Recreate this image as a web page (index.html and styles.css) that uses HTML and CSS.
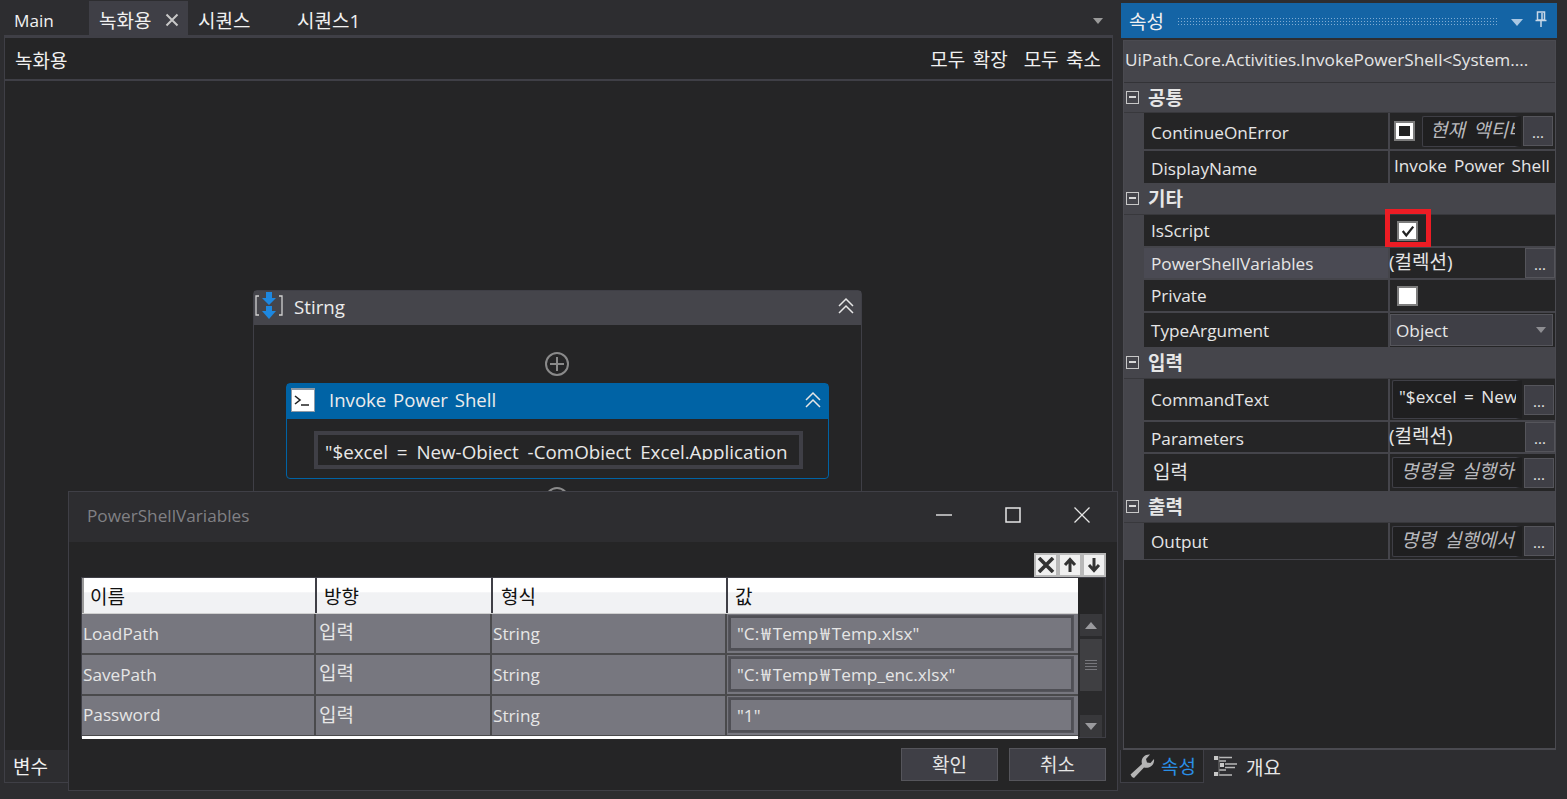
FILE: index.html
```html
<!DOCTYPE html>
<html>
	<head>
		<title>Recording</title>
		<link rel="stylesheet" href="styles.css">
	</head>
	<body>
		<div class="app">
			<div class="left">
				<div class="tabs">
					<div class="tab tab-main">Main</div>
					<div class="tab tab-active ko">녹화용<svg class="tab-x" width="14" height="14" viewBox="0 0 14 14"><path d="M1.5 1.5 12.5 12.5M12.5 1.5 1.5 12.5" stroke="#c8c8c8" stroke-width="2"/></svg></div>
					<div class="tab tab-seq ko">시퀀스</div>
					<div class="tab tab-seq1 ko">시퀀스1</div>
					<svg class="tabs-arrow" width="10" height="6" viewBox="0 0 10 6"><path d="M0 0H10L5 6Z" fill="#9a9a9a"/></svg>
				</div>
				<div class="doc">
					<div class="doc-head">
						<span class="crumb ko">녹화용</span>
						<span class="doc-actions ko"><span>모두 확장</span><span>모두 축소</span></span>
					</div>
					<div class="canvas">
						<div class="seq">
							<div class="seq-head">
								<svg width="30" height="30" viewBox="0 0 30 30">
									<path d="M5 5H2V24H5M25 5H28V24H25" fill="none" stroke="#d0d0d0" stroke-width="1.3"/>
									<path d="M12 1H18V7H22L15 14 8 7H12ZM12 15H18V20H22L15 28 8 20H12Z" fill="#1e88e0"/>
								</svg>
								<span class="seq-title">Stirng</span>
								<svg class="chev" width="18" height="18" viewBox="0 0 18 18"><path d="M2 9 9 2 16 9M2 16 9 9 16 16" fill="none" stroke="#e6e6e6" stroke-width="1.5"/></svg>
							</div>
							<div class="seq-body">
								<svg class="plus" width="26" height="26" viewBox="0 0 26 26"><circle cx="13" cy="13" r="11" fill="none" stroke="#8a8a8a" stroke-width="2"/><path d="M13 6V20M6 13H20" stroke="#8a8a8a" stroke-width="2"/></svg>
								<div class="act">
									<div class="act-head">
										<svg width="24" height="24" viewBox="0 0 24 24"><rect x="0" y="0" width="24" height="24" fill="#8f9aa6"/><rect x="1" y="2" width="22" height="21" fill="#fff"/><path d="M4 8 9 12 4 16" fill="none" stroke="#222" stroke-width="1.6"/><path d="M10 17H18" stroke="#222" stroke-width="1.5"/></svg>
										<span class="act-title">Invoke Power Shell</span>
										<svg class="chev" width="18" height="18" viewBox="0 0 18 18"><path d="M2 9 9 2 16 9M2 16 9 9 16 16" fill="none" stroke="#e6e6e6" stroke-width="1.5"/></svg>
									</div>
									<div class="act-body">
										<div class="act-input"><span>"$excel = New-Object -ComObject Excel.Application</span></div>
									</div>
								</div>
								<svg class="plus plus-low" width="26" height="26" viewBox="0 0 26 26"><circle cx="13" cy="13" r="11" fill="none" stroke="#8a8a8a" stroke-width="2"/></svg>
							</div>
						</div>

						<div class="dialog">
							<div class="dlg-title">
								<span class="dlg-name">PowerShellVariables</span>
								<svg class="win-btn win-min" width="16" height="16" viewBox="0 0 16 16"><path d="M0 8H16" stroke="#e6e6e6" stroke-width="1.4"/></svg>
								<svg class="win-btn win-max" width="16" height="16" viewBox="0 0 16 16"><rect x="1" y="1" width="14" height="14" fill="none" stroke="#e6e6e6" stroke-width="1.5"/></svg>
								<svg class="win-btn win-close" width="16" height="16" viewBox="0 0 16 16"><path d="M0.5 0.5 15.5 15.5M15.5 0.5 0.5 15.5" stroke="#e6e6e6" stroke-width="1.3"/></svg>
							</div>
							<div class="dlg-body">
								<div class="row-tools">
									<span class="tool"><svg width="18" height="16" viewBox="0 0 18 16"><path d="M2 1 16 15M16 1 2 15" stroke="#333" stroke-width="3.6"/></svg></span>
									<span class="tool"><svg width="14" height="16" viewBox="0 0 14 16"><path d="M7 3V15M2 8 7 2.5 12 8" fill="none" stroke="#333" stroke-width="3"/></svg></span>
									<span class="tool"><svg width="14" height="16" viewBox="0 0 14 16"><path d="M7 13V1M2 8 7 13.5 12 8" fill="none" stroke="#333" stroke-width="3"/></svg></span>
								</div>
								<div class="grid-wrap">
									<div class="grid">
										<div class="g-head ko">
											<div class="hc hc-name">이름</div>
											<div class="hc hc-dir">방향</div>
											<div class="hc hc-type">형식</div>
											<div class="hc hc-val">값</div>
										</div>
										<div class="g-row g-r1">
											<div class="c c-name">LoadPath</div>
											<div class="c c-dir ko"><span>입력</span></div>
											<div class="c c-type">String</div>
											<div class="c c-val"><div class="val-box">"C:<span class="won">₩</span>Temp<span class="won">₩</span>Temp.xlsx"</div></div>
										</div>
										<div class="g-row g-r2">
											<div class="c c-name">SavePath</div>
											<div class="c c-dir ko"><span>입력</span></div>
											<div class="c c-type">String</div>
											<div class="c c-val"><div class="val-box">"C:<span class="won">₩</span>Temp<span class="won">₩</span>Temp_enc.xlsx"</div></div>
										</div>
										<div class="g-row g-r3">
											<div class="c c-name">Password</div>
											<div class="c c-dir ko"><span>입력</span></div>
											<div class="c c-type">String</div>
											<div class="c c-val"><div class="val-box">"1"</div></div>
										</div>
										<div class="g-end"></div>
									</div>
									<div class="vscroll">
										<div class="vs-top"></div>
										<div class="vs-btn"><svg width="12" height="7" viewBox="0 0 12 7"><path d="M0 7H12L6 0Z" fill="#9a9a9e"/></svg></div>
										<div class="vs-thumb"><svg width="12" height="12" viewBox="0 0 12 12"><path d="M0 1.5H12M0 4.5H12M0 7.5H12M0 10.5H12" stroke="#77777c"/></svg></div>
										<div class="vs-gap"></div>
										<div class="vs-btn"><svg width="12" height="7" viewBox="0 0 12 7"><path d="M0 0H12L6 7Z" fill="#9a9a9e"/></svg></div>
									</div>
								</div>
								<div class="dlg-foot ko">
									<div class="dlg-btn">확인</div>
									<div class="dlg-btn">취소</div>
								</div>
							</div>
						</div>
					</div>
					<div class="vars ko">변수</div>
				</div>
			</div>

			<div class="right">
				<div class="prop-title">
					<span class="ko">속성</span>
					<div class="grip"></div>
					<svg class="pt-arrow" width="12" height="7" viewBox="0 0 12 7"><path d="M0 0H12L6 7Z" fill="#a9c7e3"/></svg>
					<svg class="pt-pin" width="12" height="16" viewBox="0 0 12 16"><path d="M2.5 1H9.5V9H2.5ZM7 2V9M0.5 9.5H11.5M6 10V16" fill="none" stroke="#c8d8e8" stroke-width="1.5"/></svg>
				</div>
				<div class="prop-box">
					<div class="prop-type">UiPath.Core.Activities.InvokePowerShell&lt;System....</div>

					<div class="sect h-30 ko"><span class="minus"></span>공통</div>
					<div class="prow h-38">
						<div class="pname pname-mid">ContinueOnError</div>
						<div class="pval"><span class="chk chk-tri"></span><div class="inp inp-short ko"><i>현재 액티비</i></div><span class="dots">...</span></div>
					</div>
					<div class="prow h-32 last">
						<div class="pname pname-low">DisplayName</div>
						<div class="pval"><span class="ptext">Invoke Power Shell</span></div>
					</div>

					<div class="sect h-32 ko"><span class="minus"></span>기타</div>
					<div class="prow h-33">
						<div class="pname">IsScript</div>
						<div class="pval"><span class="chk chk-on"><svg width="16" height="14" viewBox="0 0 16 14"><path d="M2 7 6 12 14 2" fill="none" stroke="#222" stroke-width="2.6"/></svg></span><span class="redbox"></span></div>
					</div>
					<div class="prow h-32 sel">
						<div class="pname">PowerShellVariables</div>
						<div class="pval"><span class="coll ko">(컬렉션)</span><span class="dots dots-end">...</span></div>
					</div>
					<div class="prow h-33">
						<div class="pname">Private</div>
						<div class="pval"><span class="chk"></span></div>
					</div>
					<div class="prow h-34 last">
						<div class="pname">TypeArgument</div>
						<div class="pval"><div class="combo">Object<svg width="10" height="6" viewBox="0 0 10 6"><path d="M0 0H10L5 6Z" fill="#8e8e92"/></svg></div></div>
					</div>

					<div class="sect h-32 ko"><span class="minus"></span>입력</div>
					<div class="prow h-43">
						<div class="pname">CommandText</div>
						<div class="pval"><div class="inp inp-wide inp-cmd">"$excel = New</div><span class="dots">...</span></div>
					</div>
					<div class="prow h-32">
						<div class="pname pname-low">Parameters</div>
						<div class="pval"><span class="coll ko">(컬렉션)</span><span class="dots dots-end">...</span></div>
					</div>
					<div class="prow h-37 last">
						<div class="pname pname-up ko">입력</div>
						<div class="pval"><div class="inp inp-wide ko"><i>명령을 실행하는</i></div><span class="dots">...</span></div>
					</div>

					<div class="sect h-32 ko"><span class="minus"></span>출력</div>
					<div class="prow h-36 last">
						<div class="pname">Output</div>
						<div class="pval"><div class="inp inp-wide ko"><i>명령 실행에서</i></div><span class="dots">...</span></div>
					</div>
					<div class="prop-rest"></div>
				</div>
				<div class="prop-tabs">
					<div class="ptab ptab-on">
						<svg width="26" height="26" viewBox="0 0 26 26"><path d="M3 24 1.5 21.5 13 11C11.5 6 15 1 21 1.5L17 6 18 9.5 21.5 10 25 6C26 12 20 16 15 14.5L5 25Z" fill="#b4b4b4"/></svg>
						<span class="ko">속성</span>
					</div>
					<div class="ptab ptab-off">
						<svg width="24" height="24" viewBox="0 0 24 24"><path d="M1 1H5V5H1ZM7 8H11V12H7ZM1 17H5V21H1Z" fill="#c8c8c8"/><path d="M6 2.5H19M6 6H13M12 9H24M12 12.5H22M6 15H13M6 20H19" stroke="#b8b8b8" stroke-width="1.3"/><path d="M6 1V21" stroke="#777" stroke-width="1"/></svg>
						<span class="ko">개요</span>
					</div>
				</div>
			</div>
		</div>
	</body>
</html>
```

FILE: styles.css
```css
html, body {
	margin: 0;
	height: 100%;
	overflow: hidden;
}

body {
	background: #2d2d30;
	color: #f1f1f1;
	font-family: 'Open Sans', 'Noto Sans CJK KR', sans-serif;
	font-size: 17.2px;
}

svg {
	display: block;
	flex: none;
}

/* korean text sits larger than the latin text */
.ko {
	font-size: 19px;
	word-spacing: 3px;
}

.app {
	display: flex;
	width: 1567px;
	height: 799px;
}

/* left side */
.left {
	width: 1113px;
	height: 783px;
	display: flex;
	flex-direction: column;
}

.tabs {
	height: 34px;
	padding-top: 1px;
	display: flex;
	align-items: stretch;
	position: relative;
}

.tab {
	display: flex;
	align-items: center;
	padding-top: 4px;
	box-sizing: border-box;
}

.tab-main { width: 89px; padding-left: 14px; }
.tab-active { width: 99px; padding-left: 10px; background: #3f3f46; }
.tab-x { margin-left: 14px; margin-top: -1px; }
.tab-seq { width: 99px; padding-left: 10px; }
.tab-seq1 { width: 110px; padding-left: 10px; }

.tabs-arrow {
	position: absolute;
	right: 10px;
	top: 18px;
}

.doc {
	flex: 1;
	margin-left: 4px;
	border: 1px solid #3f3f46;
	border-top: 3px solid #3f3f46;
	background: #252526;
	display: flex;
	flex-direction: column;
	min-height: 0;
}

.doc-head {
	height: 41px;
	box-sizing: content-box;
	border-bottom: 2px solid #3f3f46;
	display: flex;
	align-items: center;
	justify-content: space-between;
	padding: 0 11px 0 10px;
	flex: none;
}

.crumb {
	margin-top: 2px;
}

.doc-actions {
	display: flex;
	gap: 16px;
	word-spacing: 2.5px;
	margin-right: 0;
}

.canvas {
	flex: 1;
	position: relative;
}

.vars {
	height: 32px;
	flex: none;
	background: #2d2d30;
	padding-left: 8px;
	line-height: 35px;
}

/* sequence on the canvas */
.seq {
	position: absolute;
	left: 248px;
	top: 209px;
	width: 609px;
	height: 230px;
	border: 1px solid #3f3f46;
	border-radius: 4px;
	box-sizing: border-box;
}

.seq-head {
	height: 34px;
	background: #45454b;
	display: flex;
	align-items: center;
	padding: 0 6px 4px 0;
	box-sizing: border-box;
}

.seq-head .chev { margin-left: auto; margin-right: 0; }

.seq-title {
	font-size: 18.7px;
	margin-left: 10px;
	color: #ececec;
}

.seq-body {
	position: relative;
}

.plus {
	position: absolute;
	left: 290px;
	top: 26px;
}

.plus-low {
	top: 161px;
}

.act {
	position: absolute;
	left: 32px;
	top: 58px;
	width: 543px;
	height: 96px;
	border: 1px solid #0063a5;
	border-radius: 4px;
	box-sizing: border-box;
}

.act-head {
	height: 35px;
	box-sizing: border-box;
	background: #0063a5;
	display: flex;
	align-items: center;
	padding: 0 6px 4px 4px;
}

.act-head .chev { margin-left: auto; }

.act-title {
	margin-left: 14px;
	font-size: 18.6px;
	word-spacing: 2px;
	color: #ececec;
}

.act-body {
	padding: 13px 26px 0 28px;
}

.act-input {
	height: 36px;
	box-sizing: border-box;
	border: 3px solid #3f3f46;
	outline: 1px solid #3f3f46;
	outline-offset: 0;
	padding: 4px 7px 0;
	overflow: hidden;
	white-space: nowrap;
	line-height: 26px;
	font-size: 18.8px;
	word-spacing: 4px;
	background: #252526;
	color: #e8e8e8;
}

.act-input span {
	display: block;
	height: 21px;
	overflow: hidden;
}

/* dialog */
.dialog {
	position: absolute;
	left: 63px;
	top: 410px;
	width: 1050px;
	height: 300px;
	box-sizing: border-box;
	border: 1px solid #3f3f46;
	background: #252526;
	z-index: 2;
	display: flex;
	flex-direction: column;
}

.dlg-title {
	height: 50px;
	box-sizing: border-box;
	padding-bottom: 4px;
	flex: none;
	background: #2d2d30;
	display: flex;
	align-items: center;
}

.dlg-name {
	margin-left: 18px;
	color: #808084;
}

.win-btn { flex: none; }
.win-min { margin-left: auto; }
.win-max { margin-left: 53px; }
.win-close { margin-left: 53px; margin-right: 27px; }

.dlg-body {
	flex: 1;
	padding: 11px 11px 0 12px;
	display: flex;
	flex-direction: column;
}

.row-tools {
	display: flex;
	justify-content: flex-end;
	gap: 4px;
	width: max-content;
	margin-left: auto;
	background: #b8b8b8;
	padding: 2px;
	height: 20px;
}

.tool {
	background: #f0f0f0;
	width: 20px;
	height: 20px;
	display: flex;
	align-items: center;
	justify-content: center;
}

.grid-wrap {
	display: flex;
	height: 161px;
	border: 1px solid #3f3f46;
	box-sizing: border-box;
	width: 1025px;
	background: #2a2a2c;
}

.grid {
	width: 996px;
	display: flex;
	flex-direction: column;
	background: #4a4a4c;
}

.g-head {
	display: flex;
	height: 35px;
	background: linear-gradient(#fff 0, #fff 40%, #f1f2f4 42%, #f1f2f4 100%);
	border-bottom: 1px solid #d0d0d0;
	color: #111;
	flex: none;
}

.hc {
	box-sizing: border-box;
	border-left: 2px solid #3f3f46;
	padding-top: 6px;
	line-height: 26px;
	padding-left: 6px;
}

.hc-name { width: 233px; border-left-color: #9a9a9a; }
.hc-dir { width: 176px; padding-left: 7px; }
.hc-type { width: 235px; padding-left: 8px; }
.hc-val { width: 352px; padding-left: 7px; }

.g-row {
	display: flex;
	flex: none;
	height: 39px;
	background: #77777f;
	color: #e6e6e6;
}

.g-r2, .g-r3 { margin-top: 2px; }

.c {
	box-sizing: border-box;
	line-height: 39px;
	padding-left: 1px;
	border-right: 2px solid #4a4a4c;
}

.c-name { width: 234px; }
.c-dir { width: 176px; padding-left: 3px; word-spacing: 0; }
.c-dir span { position: relative; top: -1px; }
.c-type { width: 235px; padding-left: 1px; }
.c-val { width: 351px; border-right: 0; padding: 1px 0 0 1px; }

.g-r3 .c-name { line-height: 37px; }
.g-r3 .c-dir span { top: 0; }

.val-box {
	box-sizing: border-box;
	height: 34px;
	width: 344px;
	margin: 1px 0 0 1px;
	border: 2px solid #4f4f55;
	outline: 1px solid #55555b;
	line-height: 31px;
	padding-left: 6px;
	background: #77777f;
}

.won {
	padding: 0 2px;
}

.g-end {
	height: 3px;
	background: #fff;
	margin-top: 1px;
	flex: none;
}

.vscroll {
	flex: 1;
	display: flex;
	flex-direction: column;
	align-items: center;
	padding-right: 2px;
}

.vs-top {
	height: 36px;
	width: 100%;
	background: #252526;
}

.vs-btn {
	width: 22px;
	height: 22px;
	display: flex;
	align-items: center;
	justify-content: center;
	background: #38383b;
}

.vs-thumb {
	width: 22px;
	height: 52px;
	margin-top: 3px;
	background: #3f3f42;
	display: flex;
	align-items: center;
	justify-content: center;
}

.vs-gap { flex: 1; }

.dlg-foot {
	display: flex;
	justify-content: flex-end;
	gap: 11px;
	margin-top: 10px;
	width: 1025px;
}

.dlg-btn {
	width: 97px;
	height: 33px;
	box-sizing: border-box;
	background: #3f3f46;
	border: 1px solid #55555b;
	text-align: center;
	line-height: 33px;
	color: #e6e6e6;
}

/* right side */
.right {
	width: 436px;
	margin-left: 8px;
	display: flex;
	flex-direction: column;
	height: 783px;
}

.prop-title {
	height: 35px;
	margin-top: 3px;
	background: #1464a5;
	display: flex;
	align-items: center;
	padding-left: 8px;
	flex: none;
}

.grip {
	width: 320px;
	height: 8px;
	margin-left: 13px;
	background-image: radial-gradient(#7fabd3 0.8px, transparent 0.9px);
	background-size: 3px 3px;
}

.pt-arrow { margin-left: 14px; margin-top: 4px; }
.pt-pin { margin-left: 12px; margin-top: -3px; }

.prop-box {
	flex: 1;
	margin: 2px 1px 0 2px;
	box-sizing: border-box;
	border: 1px solid #4a4a50;
	border-bottom: 2px solid #4a4a50;
	background: #45454b;
	display: flex;
	flex-direction: column;
	min-height: 0;
}

.prop-type {
	height: 41px;
	line-height: 37px;
	padding-left: 1px;
	flex: none;
	white-space: nowrap;
	overflow: hidden;
	border-bottom: 1px solid #333337;
	color: #e6e6e6;
}

.sect {
	display: flex;
	align-items: center;
	font-weight: 700;
	color: #e6e6e6;
	padding: 0 0 2px 2px;
	flex: none;
	box-sizing: border-box;
	border-bottom: 1px solid #38383c;
}

.minus {
	width: 13px;
	height: 13px;
	box-sizing: border-box;
	border: 1px solid #c8c8c8;
	margin-right: 9px;
	margin-top: 2px;
	position: relative;
}

.minus::after {
	content: "";
	position: absolute;
	left: 2px;
	right: 2px;
	top: 4px;
	height: 2px;
	background: #d8d8d8;
}

.h-30 { height: 30px; }
.h-32 { height: 32px; }
.h-33 { height: 33px; }
.h-34 { height: 34px; }
.h-36 { height: 36px; }
.h-37 { height: 37px; }
.h-38 { height: 38px; }
.h-43 { height: 43px; }

.prow {
	display: flex;
	flex: none;
	margin-left: 20px;
	box-sizing: border-box;
	padding-bottom: 2px;
	background: #45454b;
}

.prow.last { padding-bottom: 0; }

.pname {
	width: 244px;
	box-sizing: border-box;
	background: #252526;
	padding-left: 7px;
	display: flex;
	align-items: center;
	color: #e6e6e6;
}

.pname-mid { padding-top: 2px; }
.pname-low { padding-top: 3px; }
.pname-up { padding-left: 9px; padding-bottom: 4px; }

.sel .pname { background: #4a4a53; }

.pval {
	width: 165px;
	margin-left: 2px;
	box-sizing: border-box;
	background: #252526;
	display: flex;
	align-items: center;
	position: relative;
	color: #e6e6e6;
}

.chk {
	width: 21px;
	height: 20px;
	box-sizing: border-box;
	background: #fff;
	border: 2px solid #7c7c7c;
	margin-left: 7px;
	display: flex;
	align-items: center;
	justify-content: center;
	flex: none;
}

.chk-tri { margin-left: 4px; }

.chk-tri::after {
	content: "";
	width: 11px;
	height: 10px;
	background: #222;
}

.chk-on svg { width: 14px; }

.redbox {
	position: absolute;
	left: -5px;
	top: -6px;
	width: 46px;
	height: 38px;
	box-sizing: border-box;
	border: 5px solid #ed1c24;
}

.inp {
	height: 31px;
	box-sizing: border-box;
	background: #1f1f20;
	border: 1px solid #3f3f46;
	border-right: 6px solid #1f1f20;
	border-radius: 2px;
	overflow: hidden;
	white-space: nowrap;
	line-height: 27px;
	color: #b8b8bc;
}

.inp-short {
	width: 99px;
	margin-left: 7px;
	padding-left: 7px;
}

.inp-wide {
	width: 130px;
	margin-left: 2px;
	padding-left: 8px;
}

.inp-cmd {
	height: 39px;
	padding-left: 6px;
	padding-top: 4px;
	color: #e6e6e6;
	line-height: 24px;
	word-spacing: 3px;
	position: relative;
}

/* tops of the wrapped second line that peek out at the bottom */
.inp-cmd::after {
	content: "";
	position: absolute;
	left: 6px;
	right: 0;
	bottom: 2px;
	height: 2px;
	background-image: radial-gradient(#c8c8cc 0.9px, transparent 1px);
	background-size: 27px 2px;
}

.dots {
	width: 30px;
	height: 30px;
	box-sizing: border-box;
	margin-left: 2px;
	background: #3f3f46;
	border: 1px solid #55555b;
	text-align: center;
	line-height: 30px;
	font-size: 15px;
	flex: none;
	color: #e6e6e6;
}

.dots-end {
	margin-left: auto;
}

.coll {
	margin-top: -5px;
	margin-left: -1px;
	word-spacing: 0;
}

.ptext {
	margin-left: 4px;
	margin-top: -3px;
	white-space: nowrap;
	word-spacing: 2.5px;
}

.combo {
	width: 163px;
	height: 32px;
	box-sizing: border-box;
	background: #3f3f46;
	border: 1px solid #55555b;
	padding-left: 5px;
	display: flex;
	align-items: center;
	justify-content: space-between;
	padding-right: 6px;
}

.prop-rest {
	flex: 1;
	background: #252526;
	border-top: 1px solid #45454b;
}

.prop-tabs {
	height: 33px;
	display: flex;
	flex: none;
	margin-left: -1px;
}

.ptab {
	display: flex;
	align-items: center;
	gap: 6px;
	height: 33px;
	box-sizing: border-box;
	padding-left: 8px;
}

.ptab-on {
	width: 84px;
	background: #252526;
	border: 1px solid #3f3f46;
	border-top: 0;
	color: #2a8fe6;
}

.ptab-off {
	padding-left: 9px;
	gap: 9px;
	color: #e6e6e6;
}
```
